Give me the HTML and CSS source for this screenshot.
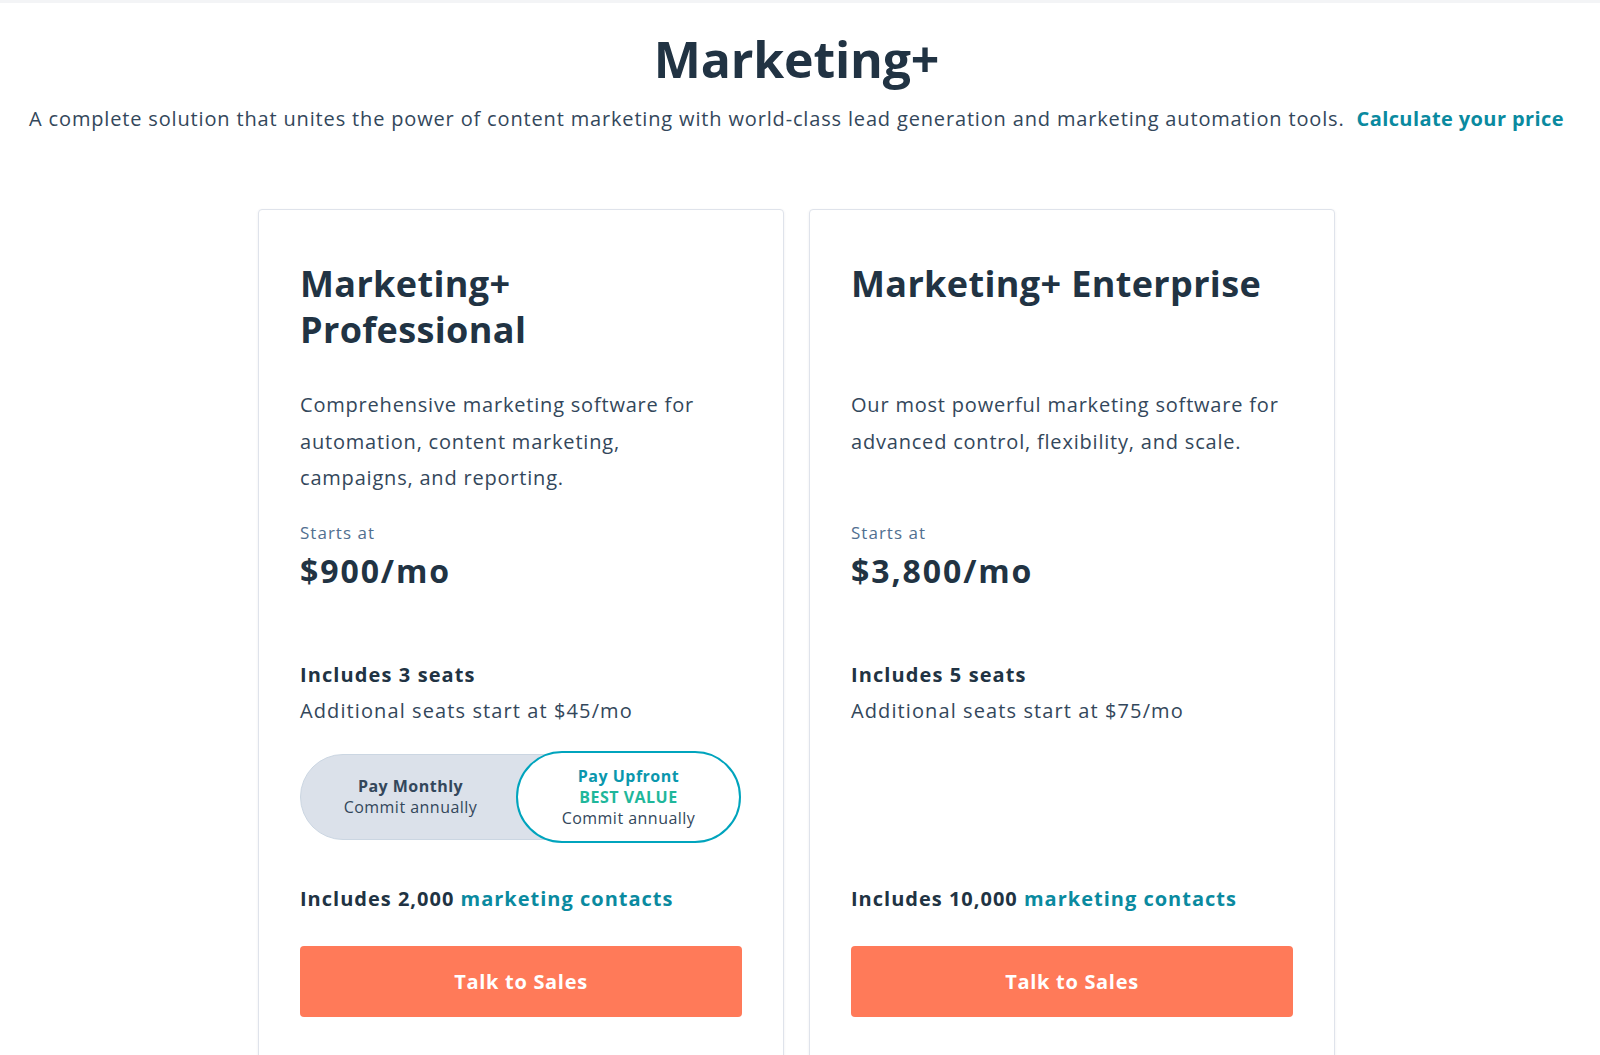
FILE: index.html
```html
<!DOCTYPE html>
<html lang="en">
<head>
<meta charset="utf-8">
<title>Marketing+</title>
<link rel="stylesheet" href="styles.css">
</head>
<body>
<main class="page">
  <header class="intro">
    <h1 class="intro-title">Marketing+</h1>
    <p class="intro-text">A complete solution that unites the power of content marketing with world-class lead generation and marketing automation tools. <a class="intro-link" href="#">Calculate your price</a></p>
  </header>

  <section class="plans">
    <article class="card">
      <h2 class="card-title">Marketing+ Professional</h2>
      <p class="card-desc">Comprehensive marketing software for automation, content marketing, campaigns, and reporting.</p>
      <p class="starts">Starts at</p>
      <p class="price">$900/mo</p>
      <p class="seats">Includes 3 seats</p>
      <p class="seats-extra">Additional seats start at $45/mo</p>
      <div class="billing">
        <div class="toggle">
          <div class="option">
            <span class="opt-name">Pay Monthly</span>
            <span class="opt-sub">Commit annually</span>
          </div>
          <div class="option option-active">
            <span class="opt-name opt-name-active">Pay Upfront</span>
            <span class="opt-badge">BEST VALUE</span>
            <span class="opt-sub">Commit annually</span>
          </div>
        </div>
      </div>
      <p class="contacts">Includes 2,000 <a class="contacts-link" href="#">marketing contacts</a></p>
      <a class="cta" href="#">Talk to Sales</a>
    </article>

    <article class="card">
      <h2 class="card-title">Marketing+ Enterprise</h2>
      <p class="card-desc">Our most powerful marketing software for advanced control, flexibility, and scale.</p>
      <p class="starts">Starts at</p>
      <p class="price">$3,800/mo</p>
      <p class="seats">Includes 5 seats</p>
      <p class="seats-extra">Additional seats start at $75/mo</p>
      <div class="billing"></div>
      <p class="contacts">Includes 10,000 <a class="contacts-link" href="#">marketing contacts</a></p>
      <a class="cta" href="#">Talk to Sales</a>
    </article>
  </section>
</main>
</body>
</html>
```

FILE: styles.css
```css
* { box-sizing: border-box; }

html, body {
  margin: 0;
  padding: 0;
  background: #ffffff;
  height: 100%;
  overflow: hidden;
}

body {
  font-family: "Open Sans", "Noto Sans", sans-serif;
  color: #33475b;
  border-top: 3px solid #f3f4f6;
}

.page {
  display: flex;
  flex-direction: column;
  align-items: center;
  padding-right: 7px;
}

.intro {
  display: flex;
  flex-direction: column;
  align-items: center;
  padding-top: 25px;
}

.intro-title {
  margin: 0;
  font-size: 50px;
  line-height: 62px;
  font-weight: 700;
  letter-spacing: -0.2px;
  color: #213343;
}

.intro-text {
  margin: 14px 0 0;
  font-size: 20px;
  line-height: 30px;
  letter-spacing: 0.042em;
  color: #33475b;
  white-space: nowrap;
}

.intro-link {
  margin-left: 6px;
  color: #0a8aa0;
  font-weight: 700;
  letter-spacing: 0.02em;
  text-decoration: none;
}

.plans {
  display: flex;
  gap: 25px;
  margin-top: 75px;
  align-items: flex-start;
}

.card {
  width: 526px;
  min-height: 900px;
  border: 1px solid #dfe3eb;
  border-radius: 4px;
  box-shadow: 0 1px 3px rgba(45, 62, 80, 0.08);
  padding: 51px 41px 0 41px;
  display: flex;
  flex-direction: column;
  background: #fff;
}

.card-title {
  margin: 0;
  font-size: 36px;
  line-height: 46px;
  font-weight: 700;
  letter-spacing: 0.01em;
  color: #213343;
  min-height: 92px;
  max-width: 300px;
}

.card:nth-child(2) .card-title { max-width: none; }

.card-desc {
  margin: 34px 0 0;
  max-width: 432px;
  font-size: 20px;
  line-height: 36.7px;
  letter-spacing: 0.04em;
  min-height: 110px;
}

.starts {
  margin: 24px 0 0;
  font-size: 17px;
  line-height: 24px;
  letter-spacing: 0.06em;
  color: #516f90;
}

.price {
  margin: 6px 0 0;
  font-size: 32px;
  line-height: 40px;
  font-weight: 700;
  letter-spacing: 0.06em;
  color: #213343;
}

.seats {
  margin: 66px 0 0;
  font-size: 20px;
  line-height: 36px;
  font-weight: 700;
  letter-spacing: 0.055em;
  color: #213343;
}

.seats-extra {
  margin: 0;
  font-size: 20px;
  line-height: 36px;
  letter-spacing: 0.055em;
}

.billing {
  margin-top: 22px;
  height: 92px;
  display: flex;
  align-items: center;
}

.toggle {
  width: 440px;
  height: 86px;
  display: grid;
  grid-template-columns: 1fr 1fr;
  background: #dbe1ea;
  border: 1px solid #cbd6e2;
  border-radius: 43px;
}

.option {
  display: flex;
  flex-direction: column;
  align-items: center;
  justify-content: center;
  font-size: 16px;
  line-height: 21px;
  letter-spacing: 0.03em;
  color: #33475b;
}

.option-active {
  margin: -4px -2px -4px -4px;
  background: #fff;
  border: 2px solid #00a4bd;
  border-radius: 46px;
}

.opt-name {
  font-weight: 700;
  color: #33475b;
}

.opt-name-active { color: #0a97ad; }

.opt-badge {
  font-weight: 700;
  color: #1fb79b;
}

.opt-sub { color: #33475b; }

.contacts {
  margin: 38px 0 0;
  font-size: 20px;
  line-height: 36px;
  font-weight: 700;
  letter-spacing: 0.05em;
  color: #213343;
}

.contacts-link {
  color: #0a8aa0;
  text-decoration: none;
}

.cta {
  margin-top: 29px;
  height: 71px;
  display: flex;
  align-items: center;
  justify-content: center;
  background: #ff7a59;
  color: #fff;
  border-radius: 4px;
  font-size: 20px;
  font-weight: 700;
  letter-spacing: 0.035em;
  text-decoration: none;
}
```
